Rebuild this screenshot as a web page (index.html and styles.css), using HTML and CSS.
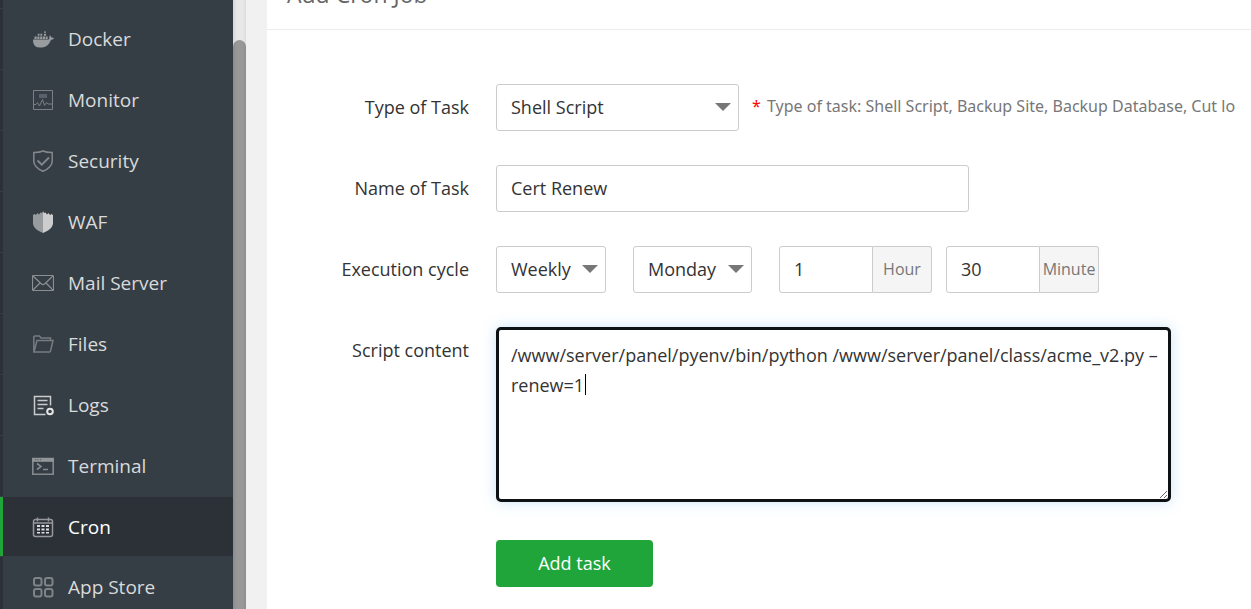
FILE: index.html
```html
<!DOCTYPE html>
<html lang="en">
<head>
<meta charset="utf-8">
<title>Cron</title>
<link rel="stylesheet" href="styles.css">
</head>
<body>
<div class="app">
  <nav class="sidebar" aria-label="Main menu">
    <ul class="menu">
      <li class="menu-item"><a class="menu-link" href="#">
        <svg class="icon" viewBox="0 0 22 22"><path fill="#999c9e" d="M1 11.500h15.500c.8-.3 1-1 .7-2l.6-2.200c1 .6 1.300 1.200 1.300 2.200 1 0 2 .1 2.900.5-.4 1.200-1.500 1.800-3 1.800C17.500 16 14.500 19.500 10 19.500H7.500C3 19.500.8 16 1 11.500zM2.500 8.500h2.200v2.500H2.500zM5.300 8.500h2.200v2.500H5.300zM8.100 8.500h2.200v2.500H8.100zM10.900 8.500h2.200v2.500h-2.200zM13.700 8.500h2v2.500h-2zM5.800 5.700h1.700v2H5.800zM8.400 5.700h1.900v2H8.400zM12 5.700h2v2h-2zM12 3.500h2v1.300h-2z"/></svg>
        <span>Docker</span></a></li>
      <li class="menu-item"><a class="menu-link" href="#">
        <svg class="icon" viewBox="0 0 22 22"><path fill="none" stroke="#7b8084" d="M1.500 1.500h19v19h-19zM2 15.500h2l1.500-2 2 3.500 3-6.500 2 6 2-3 1.500 1.500H20"/><path fill="#59626c" d="M7 5h8v4H7z"/></svg>
        <span>Monitor</span></a></li>
      <li class="menu-item"><a class="menu-link" href="#">
        <svg class="icon" viewBox="0 0 22 22"><path fill="none" stroke="#84888b" stroke-width="1.500" d="M11 1c3 1.300 6 1.600 9.200 1.500v8.500c0 4.500-4 8-9.200 10.300C5.800 19 1.800 15.500 1.800 11V2.500C5 2.600 8 2.300 11 1z"/><path fill="none" stroke="#84888b" stroke-width="1.800" d="M5.500 10.500l4.300 4.200 7.200-7.200"/></svg>
        <span>Security</span></a></li>
      <li class="menu-item"><a class="menu-link" href="#">
        <svg class="icon" viewBox="0 0 22 22"><path fill="#999c9e" d="M11 0v22C5 19.500 1 16.500 1 12V4l1.500-1L4 4l1.500-2L7 3.500 8.500 1.500 10 2z"/><path fill="#cbcdce" d="M11 0v22c6-2.500 10-5.500 10-10V4l-1.500-1L18 4l-1.500-2L15 3.500 13.500 1.500 12 2z"/></svg>
        <span>WAF</span></a></li>
      <li class="menu-item"><a class="menu-link" href="#">
        <svg class="icon" viewBox="0 0 22 22"><path fill="none" stroke="#8b8f91" stroke-width="1.200" d="M1.500 3.500h19a1 1 0 0 1 1 1v13a1 1 0 0 1-1 1h-19a1 1 0 0 1-1-1v-13a1 1 0 0 1 1-1zM1 4l8.500 8c1 .8 2 .8 3 0L21 4M1 18l7-7M21 18l-7-7"/></svg>
        <span>Mail Server</span></a></li>
      <li class="menu-item"><a class="menu-link" href="#">
        <svg class="icon" viewBox="0 0 22 22"><path fill="none" stroke="#777c80" stroke-width="1.500" d="M1.800 18.500V4a1 1 0 0 1 1-1h4.700l1.500 2h9.500v2.500M2 19l3-11.500h16L18.500 18c-.1.600-.5 1-1 1z"/></svg>
        <span>Files</span></a></li>
      <li class="menu-item"><a class="menu-link" href="#">
        <svg class="icon" viewBox="0 0 22 22"><path fill="none" stroke="#c9cbcd" stroke-width="1.500" d="M18.500 11.500v-9h-16v18h11M5.500 6.500h10M5.500 10.500h10M5.500 14.500h6"/><circle cx="18" cy="17.500" r="2.800" fill="none" stroke="#e4e5e6" stroke-width="2"/></svg>
        <span>Logs</span></a></li>
      <li class="menu-item"><a class="menu-link" href="#">
        <svg class="icon" viewBox="0 0 22 22"><path fill="none" stroke="#85898c" stroke-width="1.600" d="M.8 3.500h20.400v15.700H.8zM5 8.500l4 3-4 3M11 14.500h5"/><path fill="#939699" d="M.5 3h21v3.800H.5z"/><path fill="#5c6369" d="M3 4h1.200v1.200H3zM5.500 4h1.200v1.200H5.500zM8 4h1.200v1.200H8z"/></svg>
        <span>Terminal</span></a></li>
      <li class="menu-item menu-item-active"><a class="menu-link" href="#" aria-current="page">
        <svg class="icon" viewBox="0 0 22 22"><path fill="none" stroke="#96989c" stroke-width="1.500" d="M3.500 3.500h15a2 2 0 0 1 2 2v13a2 2 0 0 1-2 2h-15a2 2 0 0 1-2-2v-13a2 2 0 0 1 2-2zM2 7h18M5.500 1.500v4M16.500 1.500v4"/><path fill="#dcddde" d="M5 9h3v2H5zM9.500 9h3v2h-3zM14 9h3v2h-3zM5 12.500h3v2H5zM9.500 12.500h3v2h-3zM14 12.500h3v2h-3zM5 16h3v1.500H5zM9.500 16h3v1.500h-3zM14 16h3v1.500h-3z"/></svg>
        <span>Cron</span></a></li>
      <li class="menu-item"><a class="menu-link" href="#">
        <svg class="icon" viewBox="0 0 22 22"><g fill="none" stroke="#7f8487" stroke-width="2"><rect x="2" y="2" width="7.500" height="7.500" rx="2"/><rect x="13" y="2" width="7.500" height="7.500" rx="2"/><rect x="2" y="13" width="7.500" height="7.500" rx="2"/><rect x="13" y="13" width="7.500" height="7.500" rx="2"/></g></svg>
        <span>App Store</span></a></li>
    </ul>
  </nav>
  <div class="scroll-track"><div class="scroll-thumb"></div></div>
  <main class="panel">
    <h1 class="panel-title">Add Cron Job</h1>
    <form class="form">
      <div class="row">
        <label class="label" for="type">Type of Task</label>
        <span class="select select-wide"><select class="control" id="type"><option>Shell Script</option></select></span>
        <p class="hint"><span class="star">*</span> Type of task: Shell Script, Backup Site, Backup Database, Cut lo</p>
      </div>
      <div class="row">
        <label class="label" for="name">Name of Task</label>
        <input class="control name" id="name" type="text" value="Cert Renew">
      </div>
      <div class="row">
        <label class="label" for="cycle">Execution cycle</label>
        <span class="select select-cycle"><select class="control" id="cycle"><option>Weekly</option></select></span>
        <span class="select select-day"><select class="control" aria-label="Day of week"><option>Monday</option></select></span>
        <span class="group"><input class="control number" id="hour" type="text" value="1"><label class="unit" for="hour">Hour</label></span>
        <span class="group"><input class="control number" id="minute" type="text" value="30"><label class="unit" for="minute">Minute</label></span>
      </div>
      <div class="row">
        <label class="label" for="script">Script content</label>
        <div class="editor">
          <textarea class="script" id="script" spellcheck="false">/www/server/panel/pyenv/bin/python /www/server/panel/class/acme_v2.py –
renew=1</textarea>
          <span class="caret"></span>
        </div>
      </div>
      <div class="row actions">
        <button class="submit" type="button">Add task</button>
      </div>
    </form>
  </main>
</div>
</body>
</html>
```
FILE: styles.css
```css
* {
  box-sizing: border-box;
}

body {
  margin: 0;
  overflow: hidden;
  background: #f1f1f1;
  color: #333;
  font: 18px/30px "Open Sans", "Noto Sans", sans-serif;
}

.app {
  display: flex;
  height: 100vh;
}

.sidebar {
  flex: 0 0 233px;
  overflow: hidden;
  background: #363e45;
}

.menu {
  display: flex;
  flex-direction: column;
  gap: 1px;
  margin: 0;
  padding: 0;
  list-style: none;
}

.menu::before {
  content: "";
  height: 8px;
  border-left: 3px solid #2c3138;
}

.menu-item {
  height: 60px;
  border-left: 3px solid #2c3138;
}

.menu-item-active {
  height: 59px;
  border-left-color: #20a53a;
  background: #2c3138;
}

.menu-link {
  display: flex;
  align-items: center;
  gap: 14px;
  height: 100%;
  padding-left: 29px;
  color: #d8dadb;
  font-size: 19px;
  font-weight: 500;
  text-decoration: none;
}

.menu-item-active .menu-link {
  color: #fff;
}

.icon {
  width: 22px;
  height: 22px;
}

.scroll-track {
  flex: 0 0 13px;
  padding-top: 40px;
  background: linear-gradient(90deg, #d8d8d8, #e8e8e8 30%, #e8e8e8 75%, #dcdcdc);
}

.scroll-thumb {
  height: 100%;
  border-radius: 7px 7px 0 0;
  background: linear-gradient(90deg, #8c8c8c, #989898 30%, #989898 75%, #8f8f8f);
}

.panel {
  flex: 1;
  min-width: 0;
  margin-left: 21px;
  overflow: hidden;
  background: #fff;
}

.panel-title {
  margin: -36px 0 0;
  padding: 15px 20px 20px;
  border-bottom: 1px solid #ececec;
  color: #666;
  font-size: 23px;
  font-weight: 400;
  line-height: 30px;
}

.form {
  display: flex;
  flex-direction: column;
  gap: 34px;
  padding-top: 54px;
}

.row {
  display: flex;
}

.label {
  flex: 0 0 202px;
  margin-right: 27px;
  line-height: 47px;
  text-align: right;
}

.control {
  height: 47px;
  padding: 0 14px 2px;
  border: 1px solid #ccc;
  border-radius: 3px;
  background: #fff;
  color: #333;
  font: inherit;
}

.select {
  position: relative;
  flex: none;
}

.select .control {
  width: 100%;
  appearance: none;
}

.select::after {
  content: "";
  position: absolute;
  top: 19px;
  right: 8px;
  width: 16px;
  height: 8px;
  background: #777;
  clip-path: polygon(0 0, 100% 0, 50% 100%);
  pointer-events: none;
}

.select-wide {
  width: 243px;
}

.select-cycle {
  width: 110px;
  margin-right: 27px;
}

.select-day {
  width: 119px;
  margin-right: 27px;
}

.hint {
  margin: 0 0 0 13px;
  color: #777;
  font-family: "Noto Sans", "Open Sans", sans-serif;
  font-size: 16px;
  line-height: 44px;
  white-space: nowrap;
}

.star {
  margin-right: 2px;
  color: #f00;
}

.name {
  width: 473px;
}

.group {
  display: flex;
  margin-right: 14px;
}

.number {
  width: 94px;
  border-radius: 3px 0 0 3px;
}

.unit {
  min-width: 59px;
  padding: 0 2px;
  border: 1px solid #ccc;
  border-left: 0;
  border-radius: 0 3px 3px 0;
  background: #f5f5f5;
  color: #777;
  font-size: 16px;
  line-height: 45px;
  text-align: center;
}

.editor {
  position: relative;
  flex: 0 0 675px;
}

.script {
  display: block;
  width: 100%;
  height: 175px;
  padding: 10px 0 10px 12px;
  border: 3px solid #0e1114;
  border-radius: 5px;
  outline: 0;
  background: #fff;
  box-shadow: 0 0 14px rgba(102, 175, 233, 0.35);
  color: #333;
  font: inherit;
}

.caret {
  position: absolute;
  top: 47px;
  left: 89px;
  width: 1px;
  height: 21px;
  background: #000;
  pointer-events: none;
}

.actions {
  margin-top: 4px;
  padding-left: 229px;
}

.submit {
  width: 157px;
  height: 47px;
  padding: 0 0 2px;
  border: 0;
  border-radius: 4px;
  background: #20a53a;
  color: #fff;
  font: inherit;
  font-weight: 500;
}
```
